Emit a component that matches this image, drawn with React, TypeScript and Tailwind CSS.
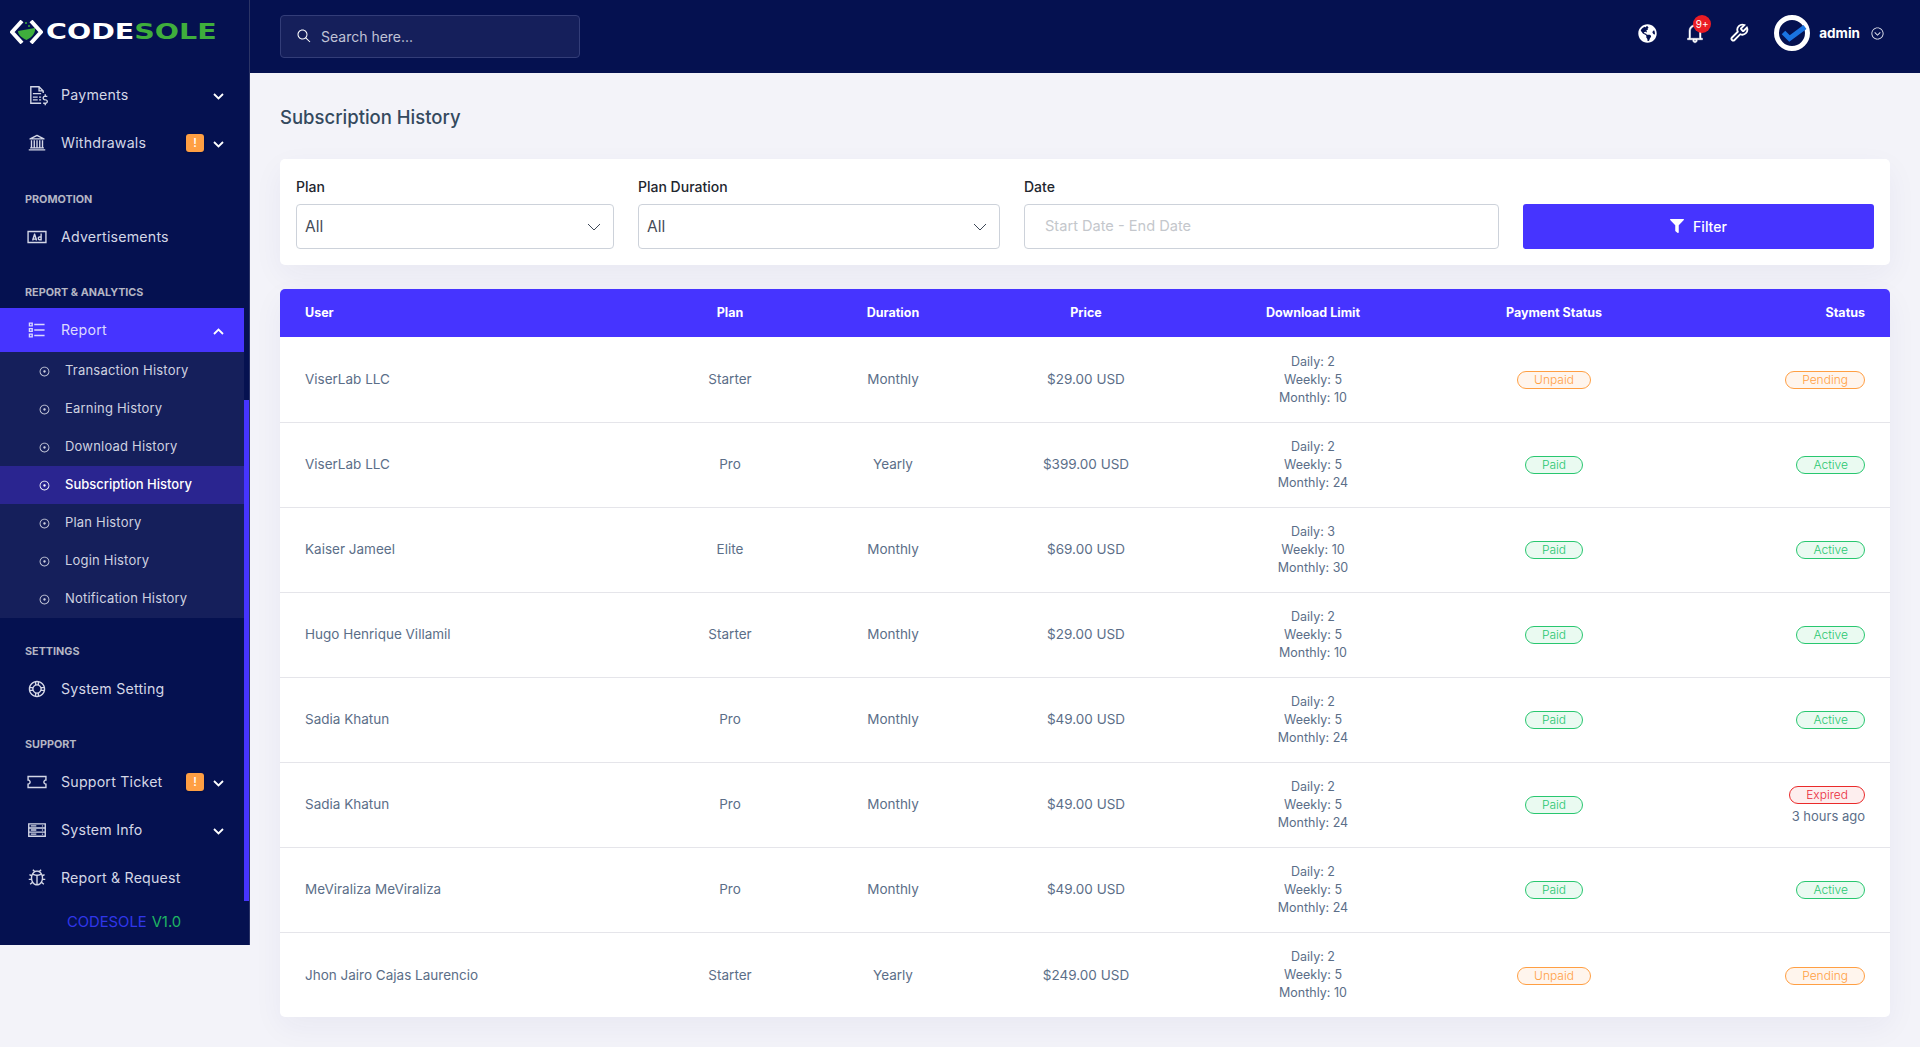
import React from 'react';
import {
  LiaFileInvoiceDollarSolid,
  LiaUniversitySolid,
  LiaAdSolid,
  LiaListSolid,
  LiaDotCircle,
  LiaLifeRing,
  LiaTicketAltSolid,
  LiaServerSolid,
  LiaBugSolid,
  LiaBell,
  LiaChevronCircleDownSolid,
  LiaSearchSolid,
} from 'react-icons/lia';
import { FaFilter, FaGlobeAmericas } from 'react-icons/fa';

type IconType = React.ComponentType<{ className?: string }>;

const subItems = [
  'Transaction History',
  'Earning History',
  'Download History',
  'Subscription History',
  'Plan History',
  'Login History',
  'Notification History',
];

const rows = [
  { user: 'ViserLab LLC', plan: 'Starter', duration: 'Monthly', price: '$29.00 USD', d: 2, w: 5, m: 10, pay: 'Unpaid', status: 'Pending' },
  { user: 'ViserLab LLC', plan: 'Pro', duration: 'Yearly', price: '$399.00 USD', d: 2, w: 5, m: 24, pay: 'Paid', status: 'Active' },
  { user: 'Kaiser Jameel', plan: 'Elite', duration: 'Monthly', price: '$69.00 USD', d: 3, w: 10, m: 30, pay: 'Paid', status: 'Active' },
  { user: 'Hugo Henrique Villamil', plan: 'Starter', duration: 'Monthly', price: '$29.00 USD', d: 2, w: 5, m: 10, pay: 'Paid', status: 'Active' },
  { user: 'Sadia Khatun', plan: 'Pro', duration: 'Monthly', price: '$49.00 USD', d: 2, w: 5, m: 24, pay: 'Paid', status: 'Active' },
  { user: 'Sadia Khatun', plan: 'Pro', duration: 'Monthly', price: '$49.00 USD', d: 2, w: 5, m: 24, pay: 'Paid', status: 'Expired', note: '3 hours ago' },
  { user: 'MeViraliza MeViraliza', plan: 'Pro', duration: 'Monthly', price: '$49.00 USD', d: 2, w: 5, m: 24, pay: 'Paid', status: 'Active' },
  { user: 'Jhon Jairo Cajas Laurencio', plan: 'Starter', duration: 'Yearly', price: '$249.00 USD', d: 2, w: 5, m: 10, pay: 'Unpaid', status: 'Pending' },
];

const WrenchIcon = ({ className }: { className?: string }) => (
  <svg viewBox="0 0 24 24" fill="none" stroke="currentColor" strokeWidth="2.2" className={className}>
    <path d="M14.7 6.3a1 1 0 0 0 0 1.4l1.6 1.6a1 1 0 0 0 1.4 0l3.77-3.77a6 6 0 0 1-7.94 7.94l-6.91 6.91a2.12 2.12 0 0 1-3-3l6.91-6.91a6 6 0 0 1 7.94-7.94l-3.76 3.76z" />
  </svg>
);

const Badge = ({ label }: { label: string }) => {
  const tone =
    label === 'Paid' || label === 'Active'
      ? 'border-[#28c76f] bg-[#eafaf1] text-[#28c76f]'
      : label === 'Expired'
        ? 'border-[#ea2a2a] bg-[#fdeeee] text-[#ea2a3a]'
        : 'border-[#ff9f43] bg-[#fff5ed] text-[#ff9f43]';
  return (
    <span className={`inline-flex h-[18px] items-center rounded-full border px-4 text-[12px] font-light ${tone}`}>
      {label}
    </span>
  );
};

const SectionLabel = ({ children, first }: { children: React.ReactNode; first?: boolean }) => (
  <div className={`${first ? 'mt-[27px]' : 'mt-[26px]'} mb-[7px] h-4 pl-[25px] text-[10.8px] font-bold leading-4 text-[#b4b6c4]`}>
    {children}
  </div>
);

const Caret = ({ up }: { up?: boolean }) => (
  <svg viewBox="0 0 11 7" className={`mt-[2px] h-[7px] w-[11px] shrink-0 ${up ? 'rotate-180' : ''}`}>
    <path d="M1 1 L5.5 5.5 L10 1" fill="none" stroke="#fff" strokeWidth="1.8" />
  </svg>
);

const NavItem = ({
  icon: Icon,
  label,
  caret,
  alert,
  open,
  mb,
}: {
  icon: IconType;
  label: string;
  caret?: boolean;
  alert?: boolean;
  open?: boolean;
  mb?: boolean;
}) => (
  <div className={`flex h-11 w-[244px] items-center pl-[26px] pr-5 ${open ? 'bg-[#4634ff] text-[#dcd9ff]' : 'text-[#d4d7e6]'} ${mb ? 'mb-1' : ''}`}>
    <Icon className="h-[22px] w-[22px] shrink-0" />
    <span className="ml-[13px] flex-1 text-[14.2px] tracking-[0.2px]">{label}</span>
    {alert && (
      <span className="mr-[9px] flex h-[18px] w-[18px] items-center justify-center rounded-[3px] bg-[#ff9f43] text-[12px] font-medium text-white shadow-sm">
        !
      </span>
    )}
    {caret && <Caret up={open} />}
  </div>
);

const Sidebar = () => (
  <aside className="relative h-[945px] w-[250px] shrink-0 border-r border-[#2b3466] bg-[#051150]">
    <div className="flex h-[73px] items-start overflow-hidden pl-[10px] pt-[20px]">
      <svg viewBox="0 0 33 24" className="h-[24px] w-[33px] shrink-0">
        <path d="M12 1 L2 12 L12 23" fill="none" stroke="#fff" strokeWidth="4" strokeLinejoin="round" />
        <path d="M21 1 L31 12 L21 23" fill="none" stroke="#fff" strokeWidth="4" strokeLinejoin="round" />
        <path d="M8 11 L25 8 C26 13 21 18 16.5 20 C12 18 8 15 8 11 Z" fill="#3fae3c" />
        <circle cx="16" cy="3" r="1" fill="#3fae3c" />
        <circle cx="19" cy="6" r="1" fill="#3fae3c" />
      </svg>
      <span className="ml-[3px] mt-[-1px] inline-block origin-left scale-x-[1.39] whitespace-nowrap font-['DejaVu_Sans',sans-serif] text-[20.5px] font-bold leading-[26px] text-white">
        CODE<span className="text-[#3fae3c]">SOLE</span>
      </span>
    </div>
    <NavItem icon={LiaFileInvoiceDollarSolid} label="Payments" caret mb />
    <NavItem icon={LiaUniversitySolid} label="Withdrawals" caret alert />
    <SectionLabel first>PROMOTION</SectionLabel>
    <NavItem icon={LiaAdSolid} label="Advertisements" />
    <SectionLabel>REPORT &amp; ANALYTICS</SectionLabel>
    <NavItem icon={LiaListSolid} label="Report" caret open />
    <div className="w-[244px] bg-[#151f5b]">
      {subItems.map((item) => {
        const active = item === 'Subscription History';
        return (
          <div
            key={item}
            className={`flex h-[38px] items-center pl-[38px] text-[13px] ${active ? 'bg-[#2a2590] font-medium text-white' : 'tracking-[0.2px] text-[#cfd2e0]'}`}
          >
            <LiaDotCircle className="h-[13px] w-[13px] shrink-0" />
            <span className="ml-[14px]">{item}</span>
          </div>
        );
      })}
    </div>
    <SectionLabel>SETTINGS</SectionLabel>
    <NavItem icon={LiaLifeRing} label="System Setting" />
    <SectionLabel>SUPPORT</SectionLabel>
    <NavItem icon={LiaTicketAltSolid} label="Support Ticket" caret alert mb />
    <NavItem icon={LiaServerSolid} label="System Info" caret mb />
    <NavItem icon={LiaBugSolid} label="Report & Request" />
    <div className="flex h-[45px] w-[248px] items-center justify-center text-[14.8px]">
      <span className="text-[#3036ea]">CODESOLE</span>
      <span className="ml-[5px] text-[#1fb563]">V1.0</span>
    </div>
    {/* scroll thumb sits on top of the nav */}
    <div className="absolute left-[244px] top-[400px] h-[501px] w-[5px] bg-[#4634ff]" />
  </aside>
);

const Topbar = () => (
  <header className="flex h-[73px] items-center bg-[#051150] pl-[30px] pr-[35px]">
    <div className="flex h-[43px] w-[300px] items-center rounded-[4px] border border-[#333d78] bg-[#151f5b] pb-[1px] pl-[15px]">
      <LiaSearchSolid className="h-[16px] w-[16px] -scale-x-100 text-white" />
      <span className="ml-[9px] text-[14px] text-[#c0c3d6]">Search here...</span>
    </div>
    <div className="ml-auto flex items-center pb-[7px]">
      <FaGlobeAmericas className="h-[19px] w-[19px] text-white" />
      <div className="relative ml-[26px] h-[24px] w-[24px]">
        <LiaBell className="h-[24px] w-[24px] stroke-current stroke-[0.6] text-white" />
        <span className="absolute left-[10px] top-[-6px] flex h-[18px] w-[18px] items-center justify-center rounded-full bg-[#ea1c24] text-[10px] text-white">
          9+
        </span>
      </div>
      <WrenchIcon className="ml-[22px] h-[20px] w-[20px] text-white" />
      <svg viewBox="0 0 36 36" className="ml-[25px] h-[36px] w-[36px]">
        <circle cx="18" cy="18" r="15.5" fill="#051150" stroke="#fff" strokeWidth="5" />
        <path d="M9.5 17.5 L15.5 23.5 L31 12" fill="none" stroke="#1a74e2" strokeWidth="5" />
      </svg>
      <span className="ml-[9px] text-[13.5px] font-bold text-white">admin</span>
      <LiaChevronCircleDownSolid className="ml-[10px] h-[15px] w-[15px] text-[#e4e6f0]" />
    </div>
  </header>
);

const FilterSelect = ({ label }: { label: string }) => (
  <div>
    <div className="mb-[5px] h-6 text-[14px] font-medium leading-6 text-[#22262e]">{label}</div>
    <div className="flex h-[45px] items-center justify-between rounded-[4px] border border-[#cdd2da] pl-[8px] pr-[12px] pt-[1px] text-[15.5px] text-[#444b58]">
      All
      <svg viewBox="0 0 14 8" className="h-2 w-[14px]">
        <path d="M1 1 L7 7 L13 1" fill="none" stroke="#3d4757" strokeWidth="1" />
      </svg>
    </div>
  </div>
);

const Filters = () => (
  <section className="grid grid-cols-[318px_362px_475px_351px] items-end gap-6 rounded-[5px] bg-white p-4 shadow-[0_10px_30px_rgba(46,45,116,0.05)]">
    <FilterSelect label="Plan" />
    <FilterSelect label="Plan Duration" />
    <div>
      <div className="mb-[5px] h-6 text-[14px] font-medium leading-6 text-[#22262e]">Date</div>
      <div className="flex h-[45px] items-center rounded-[4px] border border-[#cdd2da] pl-5 text-[14.6px] text-[#c4c7cc]">
        Start Date - End Date
      </div>
    </div>
    <button className="flex h-[45px] items-center justify-center rounded-[3px] bg-[#4634ff] pb-[1px] text-[14px] font-medium text-white">
      <FaFilter className="mr-[9px] h-[14px] w-[14px]" />
      Filter
    </button>
  </section>
);

const HistoryTable = () => (
  <section className="mt-6 overflow-hidden rounded-[5px] bg-white shadow-[0_10px_30px_rgba(46,45,116,0.05)]">
    <table className="w-full table-fixed border-collapse text-[13.5px] text-[#5b6e88]">
      <thead>
        <tr className="h-12 bg-[#4634ff] text-[12.5px] text-white">
          <th className="w-[388px] pl-[25px] text-left font-bold">User</th>
          <th className="w-[124px] font-bold">Plan</th>
          <th className="w-[202px] font-bold">Duration</th>
          <th className="w-[184px] font-bold">Price</th>
          <th className="w-[270px] font-bold">Download Limit</th>
          <th className="w-[212px] font-bold">Payment Status</th>
          <th className="w-[230px] pr-[25px] text-right font-bold">Status</th>
        </tr>
      </thead>
      <tbody>
        {rows.map((row, i) => (
          <tr key={i} className={`h-[85px] ${i < rows.length - 1 ? 'border-b border-[#e5e5ea]' : ''}`}>
            <td className="pl-[25px]">{row.user}</td>
            <td className="text-center">{row.plan}</td>
            <td className="text-center">{row.duration}</td>
            <td className="text-center">{row.price}</td>
            <td className="pt-[1px] text-center text-[12.5px] leading-[18px]">
              <div>Daily: {row.d}</div>
              <div>Weekly: {row.w}</div>
              <div>Monthly: {row.m}</div>
            </td>
            <td className="text-center">
              <Badge label={row.pay} />
            </td>
            <td className="pr-[25px] text-right">
              <Badge label={row.status} />
              {row.note && <div className="mt-[3px] text-[13px] leading-[18px]">{row.note}</div>}
            </td>
          </tr>
        ))}
      </tbody>
    </table>
  </section>
);

export default function App() {
  return (
    <div className="flex min-h-[1047px] items-start bg-[#f3f3f9] font-['Inter',sans-serif]">
      <Sidebar />
      <div className="min-w-0 flex-1">
        <Topbar />
        <main className="px-[30px] pb-[30px] pt-7">
          <h1 className="mb-7 h-[30px] pt-[1px] text-[18.5px] font-medium leading-[30px] text-[#34495e]">Subscription History</h1>
          <Filters />
          <HistoryTable />
        </main>
      </div>
    </div>
  );
}
